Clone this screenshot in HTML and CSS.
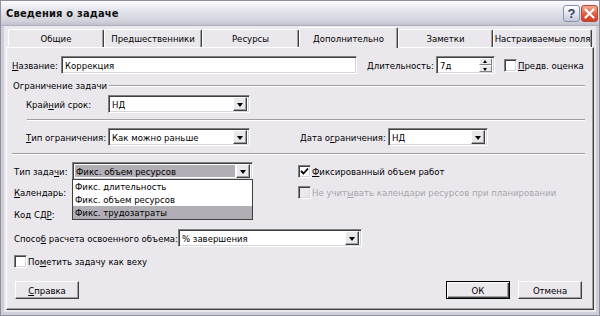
FILE: index.html
```html
<!DOCTYPE html>
<html lang="ru">
<head>
  <meta charset="UTF-8">
  <title>Сведения о задаче</title>
  <link rel="stylesheet" href="styles.css">
</head>
<body>
  <div class="window">
    <div class="titlebar">
      <span class="title">Сведения о задаче</span>
      <div class="caption-btns">
        <span class="cbtn help">?</span>
        <span class="cbtn close">
          <svg width="11" height="11" viewBox="0 0 11 11"><path d="M1.5 1.5 L9.5 9.5 M9.5 1.5 L1.5 9.5" stroke="#fff" stroke-width="2.2" stroke-linecap="round"/></svg>
        </span>
      </div>
    </div>

    <div class="client">
      <div class="tabs">
        <div class="tab">Общие</div>
        <div class="tab">Предшественники</div>
        <div class="tab">Ресурсы</div>
        <div class="tab active">Дополнительно</div>
        <div class="tab">Заметки</div>
        <div class="tab">Настраиваемые поля</div>
      </div>

      <div class="panel">
        <div class="row row-name">
          <span class="lbl lbl-name"><u>Н</u>азвание:</span>
          <div class="field name-field">Коррекция</div>
          <span class="lbl lbl-dur"><u>Д</u>лительность:</span>
          <div class="field spin">
            <span class="val">7д</span>
            <span class="spin-btns"><span class="sbtn up"></span><span class="sbtn down"></span></span>
          </div>
          <span class="check"></span>
          <span class="check-text"><u>П</u>редв. оценка</span>
        </div>

        <div class="group-head">Ограничение задачи</div>

        <div class="row row-deadline">
          <span class="lbl lbl-c1">Край<u>н</u>ий срок:</span>
          <div class="field select w142"><span class="val">НД</span><span class="drop-btn"></span></div>
        </div>

        <div class="sep sep-inner"></div>

        <div class="row row-constraint">
          <span class="lbl lbl-c1"><u>Т</u>ип ограничения:</span>
          <div class="field select w142"><span class="val">Как можно раньше</span><span class="drop-btn"></span></div>
          <span class="lbl lbl-date">Дата о<u>г</u>раничения:</span>
          <div class="field select w100"><span class="val">НД</span><span class="drop-btn"></span></div>
        </div>

        <div class="sep sep-full"></div>

        <div class="row row-type">
          <span class="lbl lbl-left">Тип зада<u>ч</u>и:</span>
          <div class="combo">
            <div class="field select w181 focused"><span class="val">Фикс. объем ресурсов</span><span class="drop-btn"></span></div>
            <ul class="droplist">
              <li>Фикс. длительность</li>
              <li>Фикс. объем ресурсов</li>
              <li class="hl">Фикс. трудозатраты</li>
            </ul>
          </div>
          <span class="check checked right-check">
            <svg width="9" height="9" viewBox="0 0 9 9"><path d="M1 4 L3.5 6.5 L8 1.5" fill="none" stroke="#000" stroke-width="1.8"/></svg>
          </span>
          <span class="check-text"><u>Ф</u>иксированный объем работ</span>
        </div>

        <div class="row row-cal">
          <span class="lbl lbl-left"><u>К</u>алендарь:</span>
          <span class="slot"></span>
          <span class="check disabled right-check"></span>
          <span class="check-text disabled-text">Не учит<u>ы</u>вать календари ресурсов при планировании</span>
        </div>

        <div class="row row-wbs">
          <span class="lbl lbl-left">Код СД<u>Р</u>:</span>
        </div>

        <div class="row row-ev">
          <span class="lbl lbl-ev">Спосо<u>б</u> расчета освоенного объема:</span>
          <div class="field select w184"><span class="val">% завершения</span><span class="drop-btn"></span></div>
        </div>

        <div class="row row-mile">
          <span class="check"></span>
          <span class="check-text">По<u>м</u>етить задачу как веху</span>
        </div>

        <div class="row row-buttons">
          <span class="btn"><u>С</u>правка</span>
          <span class="spacer"></span>
          <span class="btn default">ОК</span>
          <span class="btn">Отмена</span>
        </div>
      </div>
    </div>
  </div>
</body>
</html>
```

FILE: styles.css
```css
body {
  margin: 0;
  font-family: "DejaVu Sans Condensed", "DejaVu Sans", sans-serif;
  font-size: 9.5px;
  color: #000;
  background: #ffffff;
}

.window {
  width: 600px;
  height: 316px;
  box-sizing: border-box;
  border: 1px solid #8e8e9e;
  background: #ebe8ed;
  box-shadow: inset 0 0 0 3px #cfcfd8;
}

/* title bar */
.titlebar {
  height: 24px;
  display: flex;
  align-items: center;
  justify-content: space-between;
  padding: 0 1px 0 5px;
  background: linear-gradient(to bottom, #fbfbfd 0%, #e6e6ee 35%, #d4d4de 80%, #c2c2ce 100%);
  border-bottom: 1px solid #b0b0bc;
}

.title {
  font-weight: bold;
  font-size: 11px;
  letter-spacing: 0.2px;
  color: #101010;
}

.caption-btns {
  display: flex;
  gap: 1px;
}

.cbtn {
  width: 17px;
  height: 17px;
  box-sizing: border-box;
  border-radius: 3px;
  display: flex;
  align-items: center;
  justify-content: center;
}

.cbtn.help {
  background: linear-gradient(to bottom, #ffffff, #dcdfee 60%, #c4c8dc);
  border: 1px solid #8b91ad;
  color: #384060;
  font-family: "Liberation Sans", Arial, sans-serif;
  font-weight: bold;
  font-size: 13px;
}

.cbtn.close {
  background: linear-gradient(to bottom, #f3a88e, #e0583c 60%, #cf3f26);
  border: 1px solid #b34a36;
}

/* client */
.client {
  padding: 1px 5px 0 5px;
}

.tabs {
  display: flex;
  height: 20px;
  padding-left: 2px;
}

.tab {
  box-sizing: border-box;
  height: 18px;
  margin-top: 2px;
  display: flex;
  align-items: center;
  justify-content: center;
  white-space: nowrap;
  border-top: 1px solid #ffffff;
  border-left: 1px solid #ffffff;
  border-right: 1px solid #404040;
  box-shadow: inset -1px 0 0 #a0a0a0;
  border-radius: 2px 2px 0 0;
  background: #ebe8ed;
}

.tab:nth-child(1) { width: 96px; }
.tab:nth-child(2) { width: 98px; }
.tab:nth-child(3) { width: 97px; }
.tab:nth-child(4) { width: 99px; }
.tab:nth-child(5) { width: 95px; }
.tab:nth-child(6) { width: 99px; }

.tab.active {
  height: 21px;
  margin-top: 0;
  margin-bottom: -1px;
  position: relative;
  z-index: 1;
}

.panel {
  height: 263px;
  box-sizing: border-box;
  border-top: 1px solid #ffffff;
  border-left: 1px solid #ffffff;
  border-right: 1px solid #404040;
  border-bottom: 1px solid #404040;
  box-shadow: inset -1px -1px 0 #a0a0a0;
  padding: 8px 0 0 5px;
}

/* rows */
.row {
  display: flex;
  align-items: center;
  height: 18px;
}

.lbl {
  white-space: nowrap;
}

u {
  text-decoration: underline;
  text-underline-offset: 1px;
}

.lbl-name { width: 49px; }
.lbl-dur { width: 69px; margin-left: 10px; }
.lbl-c1 { width: 82px; margin-left: 14px; }
.lbl-date { width: 88px; margin-left: 50px; }
.lbl-left { width: 58px; margin-left: 2px; }
.lbl-ev { width: 164px; margin-left: 2px; }

.field {
  box-sizing: border-box;
  height: 18px;
  background: #ffffff;
  border-top: 1px solid #808080;
  border-left: 1px solid #808080;
  border-right: 1px solid #ffffff;
  border-bottom: 1px solid #ffffff;
  box-shadow: inset 1px 1px 0 #404040, inset -1px -1px 0 #d8d4dc;
  display: flex;
  align-items: center;
  padding-left: 3px;
  white-space: nowrap;
}

.name-field { width: 296px; }
.w142 { width: 142px; }
.w100 { width: 100px; }
.w181 { width: 181px; }
.w184 { width: 184px; }

.select {
  padding-right: 2px;
}

.select .val {
  flex: 1;
  align-self: stretch;
  display: flex;
  align-items: center;
  margin: 1px 0;
}

.select.focused .val {
  background: #b1aeb5;
  margin: 2px 1px 2px -1px;
  padding-left: 1px;
}

.drop-btn {
  width: 14px;
  height: 14px;
  box-sizing: border-box;
  background: #ebe8ed;
  border-top: 1px solid #ffffff;
  border-left: 1px solid #ffffff;
  border-right: 1px solid #404040;
  border-bottom: 1px solid #404040;
  box-shadow: inset -1px -1px 0 #a0a0a0;
  position: relative;
}

.drop-btn::after {
  content: "";
  position: absolute;
  left: 3px;
  top: 5px;
  border-left: 3.5px solid transparent;
  border-right: 3.5px solid transparent;
  border-top: 4px solid #000;
}

.spin {
  width: 59px;
  padding-right: 2px;
}

.spin .val { flex: 1; }

.spin-btns {
  display: flex;
  flex-direction: column;
  width: 13px;
  height: 14px;
}

.sbtn {
  flex: 1;
  box-sizing: border-box;
  background: #ebe8ed;
  border-top: 1px solid #ffffff;
  border-left: 1px solid #ffffff;
  border-right: 1px solid #808080;
  border-bottom: 1px solid #808080;
  position: relative;
}

.sbtn::after {
  content: "";
  position: absolute;
  left: 3px;
  border-left: 2.5px solid transparent;
  border-right: 2.5px solid transparent;
}

.sbtn.up::after { top: 1px; border-bottom: 3px solid #000; }
.sbtn.down::after { top: 2px; border-top: 3px solid #000; }

/* checkboxes */
.check {
  width: 13px;
  height: 13px;
  box-sizing: border-box;
  background: #ffffff;
  border-top: 1px solid #808080;
  border-left: 1px solid #808080;
  border-right: 1px solid #ffffff;
  border-bottom: 1px solid #ffffff;
  box-shadow: inset 1px 1px 0 #404040, inset -1px -1px 0 #d8d4dc;
  display: flex;
  align-items: center;
  justify-content: center;
  flex: none;
}

.check.disabled {
  background: #ebe8ed;
}

.check-text {
  margin-left: 1px;
  white-space: nowrap;
}

.disabled-text {
  color: #a8a6ac;
}

.row-name .check { margin-left: 9px; }
.right-check { margin-left: 45px; }
.slot { width: 181px; }

/* group and separators */
.group-head {
  display: flex;
  align-items: center;
  height: 13px;
  margin-top: 5px;
  margin-left: 1px;
  margin-right: 8px;
  white-space: nowrap;
}

.group-head::after {
  content: "";
  flex: 1;
  margin-left: 2px;
  border-top: 1px solid #a0a0a4;
  border-bottom: 1px solid #ffffff;
}

.sep {
  height: 0;
  border-top: 1px solid #a0a0a4;
  border-bottom: 1px solid #ffffff;
  margin-right: 8px;
}

.sep-inner { margin-top: 6px; margin-left: 15px; }
.sep-full { margin-top: 7px; }

.row-deadline { margin-top: 3px; }
.row-constraint { margin-top: 7px; }
.row-type { margin-top: 7px; }
.row-cal { margin-top: 3px; }
.row-wbs { margin-top: 4px; }
.row-ev { margin-top: 6px; }
.row-mile { margin-top: 8px; height: 13px; padding-left: 2px; }
.row-buttons { margin-top: 13px; margin-right: 11px; padding-left: 3px; }

/* combo dropdown */
.combo {
  position: relative;
}

.droplist {
  position: absolute;
  left: 0;
  top: 17px;
  width: 181px;
  box-sizing: border-box;
  margin: 0;
  padding: 0;
  list-style: none;
  background: #ffffff;
  border: 1px solid #404040;
  z-index: 2;
}

.droplist li {
  height: 13px;
  line-height: 13px;
  padding-left: 2px;
  white-space: nowrap;
}

.droplist li.hl {
  background: #b1aeb5;
}

/* buttons */
.spacer { flex: 1; }

.btn {
  width: 64px;
  height: 18px;
  box-sizing: border-box;
  display: flex;
  align-items: center;
  justify-content: center;
  background: #ebe8ed;
  border-top: 1px solid #ffffff;
  border-left: 1px solid #ffffff;
  border-right: 1px solid #404040;
  border-bottom: 1px solid #404040;
  box-shadow: inset -1px -1px 0 #a0a0a0;
}

.btn.default {
  border: 1px solid #000;
  box-shadow: inset 1px 1px 0 #ffffff, inset -1px -1px 0 #404040, inset -2px -2px 0 #a0a0a0;
  margin-right: 8px;
}
```
